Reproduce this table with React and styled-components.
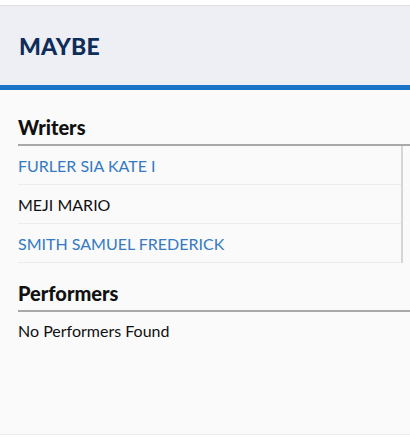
import React from "react";
import styled, { createGlobalStyle } from "styled-components";

const GlobalStyle = createGlobalStyle`
  html, body {
    margin: 0;
    padding: 0;
    background: #ffffff;
    font-family: "Lato", "Liberation Sans", sans-serif;
  }
`;

const Panel = styled.div`
  margin-top: 5px;
  border-top: 1px solid #dcdde3;
  border-bottom: 1px solid #ececec;
  background: #fafafa;
  height: 430px;
  box-sizing: border-box;
  box-shadow: 0 3px 0 #e2e2e2;
`;

const Header = styled.div`
  background: #eeeff5;
  height: 79px;
  border-bottom: 5px solid #1a75c9;
  display: flex;
  align-items: center;
  padding: 0 19px;
  box-sizing: content-box;
`;

const Title = styled.h1`
  margin: 0;
  font-size: 23px;
  font-weight: 900;
  color: #0f2d59;
  letter-spacing: 0.2px;
`;

const Body = styled.div`
  padding: 25px 0 0 18px;
`;

const Section = styled.section`
  margin-bottom: 18px;
`;

const SectionTitle = styled.h2`
  margin: 0;
  font-size: 20px;
  font-weight: 900;
  color: #111;
  padding-bottom: 5px;
  border-bottom: 2px solid #a9a9a9;
`;

const List = styled.ul`
  list-style: none;
  margin: 0 7px 0 0;
  padding: 0;
  border-right: 2px solid #d6d6d6;
`;

const Row = styled.li`
  height: 39px;
  box-sizing: border-box;
  display: flex;
  align-items: center;
  border-bottom: 1px solid #ececec;
  font-size: 16px;
  color: ${(p) => (p.$link ? "#3479c2" : "#111")};
`;

const Empty = styled.div`
  padding-top: 9px;
  font-size: 16px;
  color: #111;
`;

const writers = [
  { name: "FURLER SIA KATE I", link: true },
  { name: "MEJI MARIO", link: false },
  { name: "SMITH SAMUEL FREDERICK", link: true },
];

export default function App() {
  return (
    <>
      <GlobalStyle />
      <Panel>
        <Header>
          <Title>MAYBE</Title>
        </Header>
        <Body>
          <Section>
            <SectionTitle>Writers</SectionTitle>
            <List>
              {writers.map((w) => (
                <Row key={w.name} $link={w.link}>
                  {w.name}
                </Row>
              ))}
            </List>
          </Section>
          <Section>
            <SectionTitle>Performers</SectionTitle>
            <Empty>No Performers Found</Empty>
          </Section>
        </Body>
      </Panel>
    </>
  );
}
